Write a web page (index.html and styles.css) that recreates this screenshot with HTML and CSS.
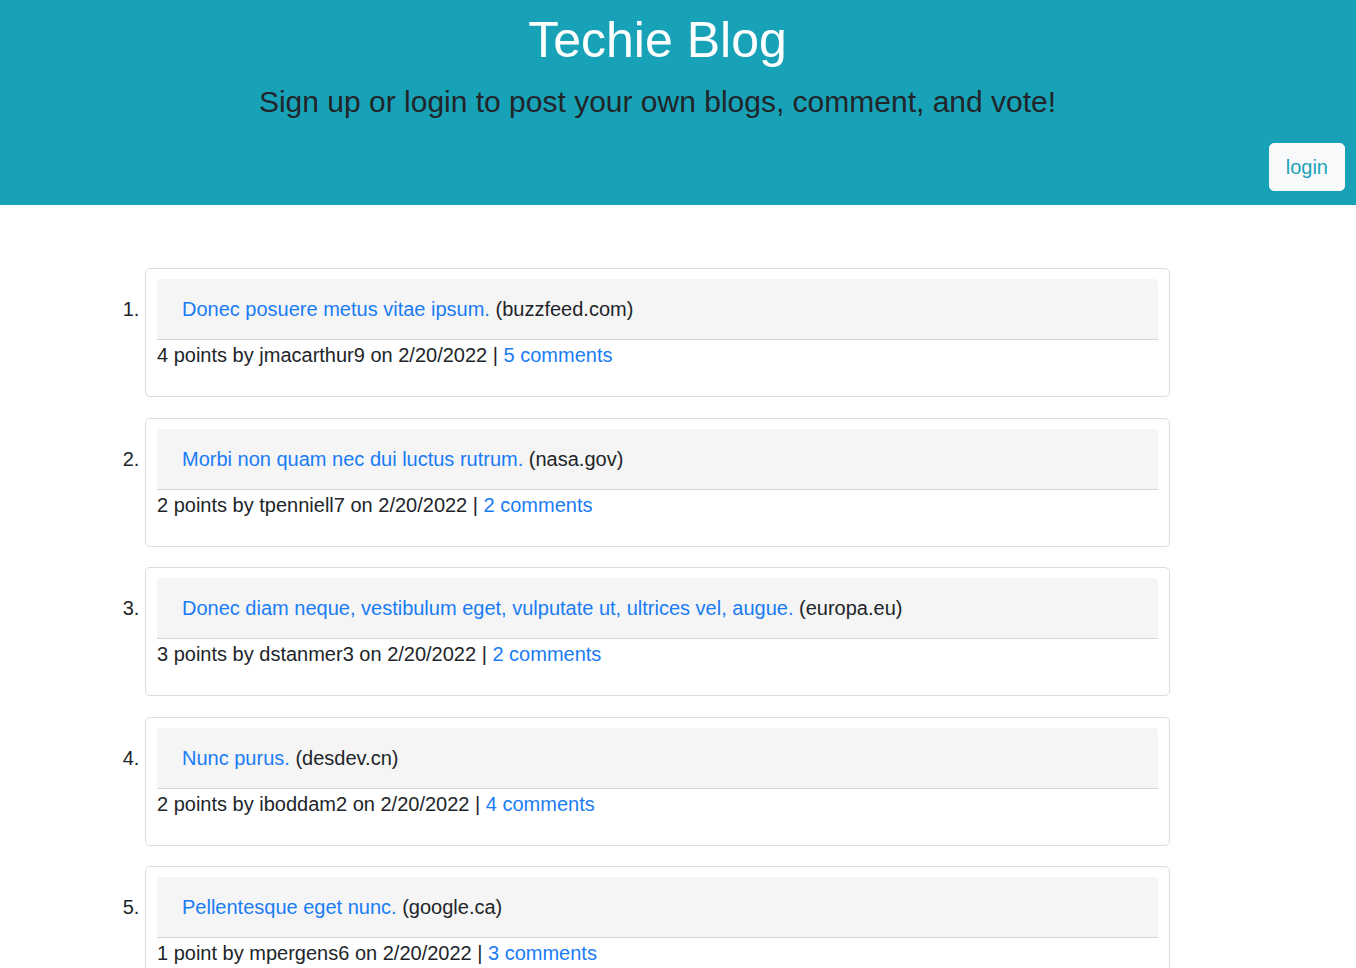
FILE: index.html
```html
<!DOCTYPE html>
<html lang="en">
<head>
<meta charset="utf-8">
<title>Techie Blog</title>
<link rel="stylesheet" href="styles.css">
</head>
<body>
<header class="site-header">
  <div class="header-text">
    <h1 class="site-title">Techie Blog</h1>
    <p class="site-lead">Sign up or login to post your own blogs, comment, and vote!</p>
  </div>
  <div class="header-actions">
    <button class="btn-login" type="button">login</button>
  </div>
</header>
<main class="main">
  <ol class="post-list">
    <li class="post-item">
      <div class="post-card">
        <div class="post-head"><a class="post-link" href="#">Donec posuere metus vitae ipsum.</a> (buzzfeed.com)</div>
        <div class="post-meta">4 points by jmacarthur9 on 2/20/2022 | <a class="post-link" href="#">5 comments</a></div>
      </div>
    </li>
    <li class="post-item">
      <div class="post-card">
        <div class="post-head"><a class="post-link" href="#">Morbi non quam nec dui luctus rutrum.</a> (nasa.gov)</div>
        <div class="post-meta">2 points by tpenniell7 on 2/20/2022 | <a class="post-link" href="#">2 comments</a></div>
      </div>
    </li>
    <li class="post-item">
      <div class="post-card">
        <div class="post-head"><a class="post-link" href="#">Donec diam neque, vestibulum eget, vulputate ut, ultrices vel, augue.</a> (europa.eu)</div>
        <div class="post-meta">3 points by dstanmer3 on 2/20/2022 | <a class="post-link" href="#">2 comments</a></div>
      </div>
    </li>
    <li class="post-item">
      <div class="post-card">
        <div class="post-head"><a class="post-link" href="#">Nunc purus.</a> (desdev.cn)</div>
        <div class="post-meta">2 points by iboddam2 on 2/20/2022 | <a class="post-link" href="#">4 comments</a></div>
      </div>
    </li>
    <li class="post-item">
      <div class="post-card">
        <div class="post-head"><a class="post-link" href="#">Pellentesque eget nunc.</a> (google.ca)</div>
        <div class="post-meta">1 point by mpergens6 on 2/20/2022 | <a class="post-link" href="#">3 comments</a></div>
      </div>
    </li>
  </ol>
</main>
</body>
</html>
```

FILE: styles.css
```css
html, body {
  margin: 0;
  padding: 0;
}
body {
  font-family: "Liberation Sans", Arial, Helvetica, sans-serif;
  color: #212529;
  background: #fff;
  font-size: 20px;
  line-height: 1.5;
}
.site-header {
  background: #17a2b8;
  padding-top: 10px;
}
.header-text {
  text-align: center;
  padding-right: 41px;
}
.site-title {
  margin: 0;
  font-size: 50px;
  font-weight: 400;
  line-height: 60px;
  color: #fff;
}
.site-lead {
  margin: 14px 0 0;
  font-size: 30px;
  font-weight: 400;
  line-height: 36px;
  color: #212529;
}
.header-actions {
  display: flex;
  justify-content: flex-end;
  padding: 23px 11px 14px 0;
}
.btn-login {
  font-family: inherit;
  font-size: 20px;
  line-height: 30px;
  padding: 8px 16px;
  border: 1px solid #f8f9fa;
  border-radius: 5px;
  background: #f8f9fa;
  color: #1ca3b8;
  cursor: pointer;
}
.main {
  padding-top: 63px;
}
.post-list {
  margin: 0;
  padding: 0 0 0 145px;
  font-size: 20px;
}
.post-item {
  width: 1025px;
  margin-bottom: 20.5px;
}
.post-card {
  border: 1px solid #dcdcdc;
  border-radius: 5px;
  padding: 10px 11px 26px;
}
.post-head {
  background: #f5f5f5;
  border-bottom: 1px solid #d6d6d6;
  border-radius: 4px 4px 0 0;
  padding: 15px 25px;
  line-height: 30px;
}
.post-meta {
  line-height: 30px;
}
.post-link {
  color: #1a7cf5;
  text-decoration: none;
}
```
